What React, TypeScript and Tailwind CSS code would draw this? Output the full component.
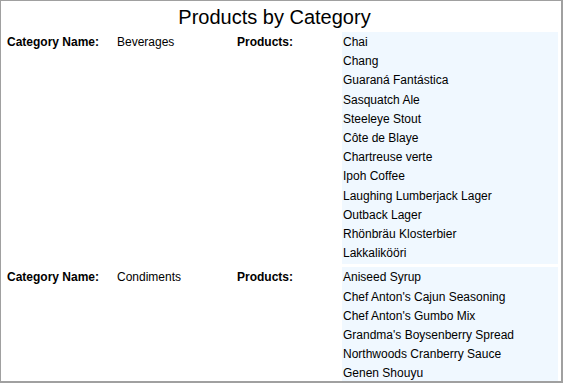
import React from "react";

const sections = [
  {
    name: "Beverages",
    extra: "",
    products: [
      "Chai",
      "Chang",
      "Guaraná Fantástica",
      "Sasquatch Ale",
      "Steeleye Stout",
      "Côte de Blaye",
      "Chartreuse verte",
      "Ipoh Coffee",
      "Laughing Lumberjack Lager",
      "Outback Lager",
      "Rhönbräu Klosterbier",
      "Lakkalikööri",
    ],
  },
  {
    name: "Condiments",
    extra: "pb-[40px]",
    products: [
      "Aniseed Syrup",
      "Chef Anton's Cajun Seasoning",
      "Chef Anton's Gumbo Mix",
      "Grandma's Boysenberry Spread",
      "Northwoods Cranberry Sauce",
      "Genen Shouyu",
    ],
  },
];

export default function App() {
  return (
    <div
      className="w-[563px] h-[383px] overflow-hidden bg-white border-[#a0a0a0] border-t border-l border-r-2 border-b-2 box-border text-black"
      style={{ fontFamily: '"Liberation Sans", Arial, sans-serif' }}
    >
      <div className="h-[31px] flex items-center justify-center pr-[13px] text-[20px] leading-none">
        Products by Category
      </div>
      <div className="flex flex-col gap-[3px] pl-[6px] pr-[1px]">
        {sections.map((s) => (
          <div key={s.name} className="flex items-start text-[12px] leading-[19.2px]">
            <div className="w-[110px] pt-px font-bold">Category Name:</div>
            <div className="w-[120px] pt-px">{s.name}</div>
            <div className="w-[105px] pt-px font-bold">Products:</div>
            <div className={`w-[216px] bg-[#f0f8ff] py-px pl-px ${s.extra}`}>
              {s.products.map((p) => (
                <div key={p}>{p}</div>
              ))}
            </div>
          </div>
        ))}
      </div>
    </div>
  );
}
